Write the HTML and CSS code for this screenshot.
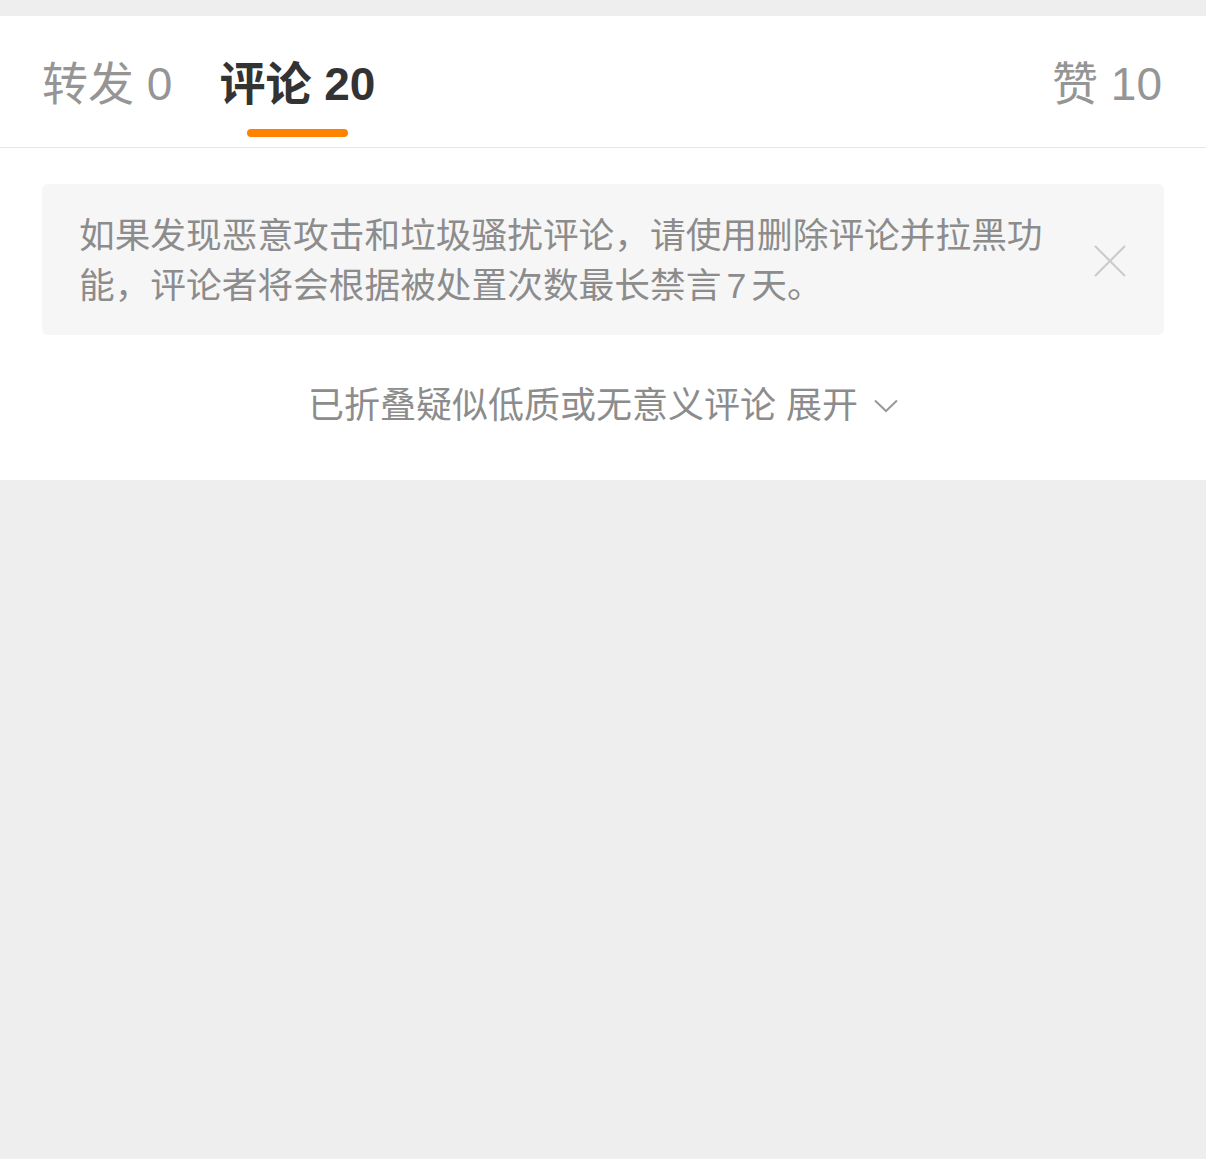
FILE: index.html
```html
<!DOCTYPE html>
<html lang="zh-CN">
<head>
    <meta charset="UTF-8">
    <meta name="viewport" content="width=device-width, initial-scale=1.0">
    <title>评论</title>
    <link rel="stylesheet" href="styles.css">
</head>
<body>
    <div class="panel">
        <div class="tabs">
            <div class="tab">
                <span class="tab-label">转发 0</span>
            </div>
            <div class="tab active">
                <span class="tab-label">评论 20</span>
                <span class="tab-bar"></span>
            </div>
            <div class="tab tab-right">
                <span class="tab-label">赞 10</span>
            </div>
        </div>

        <div class="notice">
            <p class="notice-text">如果发现恶意攻击和垃圾骚扰评论，请使用删除评论并拉黑功能，评论者将会根据被处置次数最长禁言<span class="num">7</span>天。</p>
            <svg class="notice-close" width="32" height="32" viewBox="0 0 32 32">
                <path d="M1 1 L31 31 M31 1 L1 31" stroke="#cccccc" stroke-width="2.2" fill="none"/>
            </svg>
        </div>

        <div class="folded">
            <span>已折叠疑似低质或无意义评论</span>
            <span class="folded-open">展开</span>
            <svg class="folded-arrow" width="24" height="14" viewBox="0 0 24 14">
                <path d="M1 1.5 L12 12 L23 1.5" stroke="#999999" stroke-width="2" fill="none"/>
            </svg>
        </div>
    </div>
</body>
</html>
```

FILE: styles.css
```css
body {
    margin: 0;
    padding: 0;
    background-color: #eeeeee;
    font-family: "Liberation Sans", "Noto Sans CJK SC", sans-serif;
}
.panel {
    margin-top: 16px;
    height: 464px;
    background-color: #fff;
}
.tabs {
    display: flex;
    gap: 47px;
    height: 131px;
    padding: 0 44px 0 42px;
    border-bottom: 1px solid #e6e6e6;
}
.tab {
    display: flex;
    flex-direction: column;
    align-items: center;
    padding-top: 38px;
}
.tab-label {
    font-size: 46px;
    line-height: 60px;
    color: #959595;
    white-space: nowrap;
}
.tab.active .tab-label {
    color: #333;
    font-weight: bold;
}
.tab-bar {
    display: block;
    width: 101px;
    height: 8px;
    margin-top: 15px;
    border-radius: 4px;
    background-color: #ff8200;
}
.tab-right {
    margin-left: auto;
}
.notice {
    display: flex;
    align-items: center;
    gap: 30px;
    margin: 36px 42px 0;
    padding: 27px 38px 24px 37px;
    background-color: #f6f6f6;
    border-radius: 6px;
}
.notice-text {
    flex: 1;
    margin: 0;
    font-size: 35.7px;
    line-height: 50px;
    color: #8c8c8c;
}
.num {
    padding: 0 5px;
}
.notice-close {
    flex-shrink: 0;
}
.folded {
    display: flex;
    justify-content: center;
    align-items: center;
    margin-top: 47px;
    font-size: 36px;
    line-height: 48px;
    color: #8c8c8c;
}
.folded-open {
    margin-left: 10px;
}
.folded-arrow {
    margin-left: 16px;
}
```
